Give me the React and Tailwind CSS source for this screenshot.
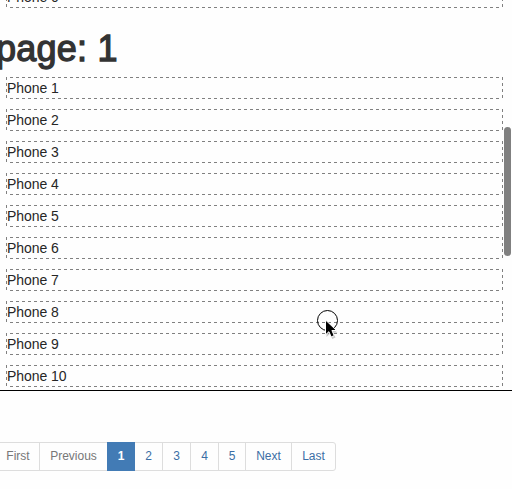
const phones = [1, 2, 3, 4, 5, 6, 7, 8, 9, 10];

const horizontal =
  'h-px bg-[repeating-linear-gradient(90deg,#808080_0px,#808080_3px,transparent_3px,transparent_6px)]';
const vertical =
  'w-px bg-[repeating-linear-gradient(180deg,#808080_0px,#808080_3px,transparent_3px,transparent_6px)]';

function Phone({ n }) {
  return (
    <li className="flex h-[22px] shrink-0 text-sm leading-5 text-[#262626]">
      <span className={vertical} />
      <div className="flex flex-1 flex-col">
        <span className={`ml-[3px] ${horizontal}`} />
        <span className="h-5 tracking-[-0.05px]">Phone {n}</span>
        <span className={`ml-[3px] ${horizontal}`} />
      </div>
      <span className={vertical} />
    </li>
  );
}

const pages = [
  { label: 'First', style: 'w-[46px] pl-[2px] text-[#777] border-[#ddd]' },
  { label: 'Previous', style: 'w-[69px] text-[#777] border-[#ddd]' },
  { label: '1', style: 'relative z-10 w-7 bg-[#427bb5] text-white font-bold border-[#427bb5]' },
  { label: '2', style: 'w-[29px] text-[#3b6ea5] border-[#ddd]' },
  { label: '3', style: 'w-[29px] text-[#3b6ea5] border-[#ddd]' },
  { label: '4', style: 'w-[29px] text-[#3b6ea5] border-[#ddd]' },
  { label: '5', style: 'w-[28px] text-[#3b6ea5] border-[#ddd]' },
  { label: 'Next', style: 'w-[47px] text-[#3b6ea5] border-[#ddd]' },
  { label: 'Last', style: 'w-[45px] rounded-r-[3px] text-[#3b6ea5] border-[#ddd]' },
];

export default function App() {
  return (
    <div className="relative flex h-[489px] w-[512px] flex-col overflow-hidden bg-[#fefefe] font-['Liberation_Sans',Arial,sans-serif]">
      <div className="h-[391px] overflow-hidden border-b border-black">
        <ul className="-mt-[14px] ml-1.5 flex w-[497px] flex-col gap-2.5">
          <Phone n={0} />
          <li className="-ml-[10px] h-[49px] pt-[11px] text-4xl leading-[40px] font-normal tracking-[0.25px] whitespace-nowrap text-[#333] [-webkit-text-stroke:1.3px_#333]">
            page: 1
          </li>
          {phones.map((n) => (
            <Phone key={n} n={n} />
          ))}
        </ul>
      </div>
      <ul className="mt-[51px] -ml-[6px] flex h-[29px] text-xs">
        {pages.map((p) => (
          <li
            key={p.label}
            className={`-mr-px flex shrink-0 items-center justify-center border pb-[2px] ${p.style}`}
          >
            {p.label}
          </li>
        ))}
      </ul>
      <div className="absolute top-[127px] left-[504px] h-[129px] w-[7px] rounded-full bg-[#808080]" />
      <svg className="absolute top-[305px] left-[312px]" width="32" height="36" viewBox="0 0 32 36">
        <circle cx="15.5" cy="15.5" r="10" fill="none" stroke="#000" />
        <path d="M14.5 18v14l3.2-3 2.6 5 3.2-1.4-2.5-4.8h4.5z" fill="#999" opacity=".5" />
        <path d="M13.5 15v14.8l3.4-3.1 2.3 5.2 3-1.3-2.3-5.1h4.6z" fill="#000" stroke="#fff" strokeWidth="1" />
      </svg>
    </div>
  );
}
